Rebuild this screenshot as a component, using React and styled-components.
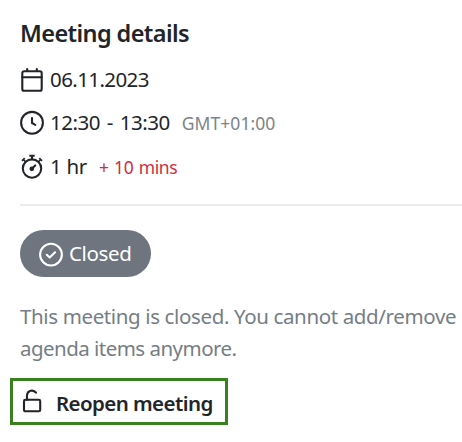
import React from "react";
import styled, { createGlobalStyle } from "styled-components";

const GlobalStyle = createGlobalStyle`
  *, *::before, *::after { box-sizing: border-box; }
  html, body { margin: 0; background: #fff; overflow: hidden; }
`;

const Panel = styled.main`
  height: 442px;
  padding: 14px 0 0 20px;
  background: #fff;
  color: #212529;
  font-family: "Noto Sans", "Open Sans", sans-serif;
  font-size: 20.5px;
  white-space: nowrap;
`;

const Title = styled.h2`
  margin: 0 0 5px;
  font-size: 23.5px;
  line-height: 39px;
  font-weight: 600;
  letter-spacing: ${(p) => p.$spacing}px;
`;

const Row = styled.div`
  display: flex;
  align-items: center;
  height: 43.5px;
`;

const Icon = styled.svg`
  display: block;
  flex: none;
  width: 24px;
  height: 26px;
  margin-right: 6px;
  fill: none;
  stroke: currentColor;
  stroke-width: 2.1;
  stroke-linecap: round;
  stroke-linejoin: round;
`;

const Text = styled.span`
  padding-bottom: 2px;
  letter-spacing: ${(p) => p.$spacing}px;
  word-spacing: ${(p) => p.$words || 0}px;
`;

const Note = styled(Text)`
  margin-left: ${(p) => p.$gap}px;
  padding: 0;
  font-size: 17.5px;
  color: ${(p) => p.$color};
`;

const Divider = styled.hr`
  height: 2px;
  margin: 15.5px 0 23.5px;
  border: 0;
  background: #e9edf1;
`;

const Badge = styled.div`
  display: flex;
  align-items: center;
  width: 131px;
  height: 47px;
  padding: 3px 0 0 19px;
  border-radius: 24px;
  background: #6e757f;
  color: #fff;

  ${Text} { padding-bottom: 4px; }
`;

const Message = styled.p`
  margin: 23px 0 14px;
  line-height: 32px;
  color: #757d85;
`;

const ReopenButton = styled.button`
  display: flex;
  align-items: center;
  width: 218px;
  height: 47px;
  margin-left: -10px;
  padding: 0 0 0 7px;
  border: 3px solid #39801f;
  background: #fff;
  color: #212529;
  font: 600 20.5px "Noto Sans", "Open Sans", sans-serif;

  ${Icon} { margin-right: 12px; }
  ${Text} { padding: 3px 0 0; }
`;

export default function App() {
  return (
    <>
      <GlobalStyle />
      <Panel>
        <Title $spacing={-0.6}>Meeting details</Title>
        <Row>
          <Icon viewBox="0 0 24 26">
            <rect x="2.3" y="4.2" width="19.4" height="19.6" rx="1.8" />
            <path d="M2.3 10.2h19.4M7.2 2v2M16.8 2v2" />
          </Icon>
          <Text $spacing={-0.6}>06.11.2023</Text>
        </Row>
        <Row>
          <Icon viewBox="0 0 24 26">
            <circle cx="12" cy="12.8" r="10.9" />
            <path d="M12 8v5l3.3 1.8" />
          </Icon>
          <Text $spacing={-0.5} $words={2.1}>12:30 - 13:30</Text>
          <Note $gap={12} $spacing={0.05} $color="#7b848c">GMT+01:00</Note>
        </Row>
        <Row>
          <Icon viewBox="0 0 24 26">
            <circle cx="12" cy="14.6" r="9.2" />
            <g strokeLinecap="butt">
              <path d="M12 1.5v4M9.3 1.8h5.4" />
              <path d="M19.3 4.2l2.7 2.7M4.7 4.2L2 6.9M3.8 6l2 2M20.2 6l-2 2" strokeWidth="1.7" />
            </g>
            <path d="M12 14.6l3.2-3.2" />
            <circle cx="11.8" cy="14.8" r="1.3" fill="currentColor" />
          </Icon>
          <Text $spacing={-0.3}>1 hr</Text>
          <Note $gap={12} $spacing={-0.4} $words={1.3} $color="#d42b40">+ 10 mins</Note>
        </Row>
        <Divider />
        <Badge>
          <Icon viewBox="0 0 24 26">
            <circle cx="12" cy="12.6" r="10.9" />
            <path d="M7.8 12.8l2.9 2.7 5.4-5.2" />
          </Icon>
          <Text $spacing={-0.35}>Closed</Text>
        </Badge>
        <Message>
          <Text $spacing={-0.37}>This meeting is closed. You cannot add/remove</Text>
          <br />
          <Text $spacing={-0.53}>agenda items anymore.</Text>
        </Message>
        <ReopenButton type="button">
          <Icon viewBox="0 0 24 26">
            <rect x="4" y="11.8" width="16.2" height="11.5" rx="1.4" />
            <path d="M7 11.8V7.2a5 5 0 0 1 9-2.5" />
          </Icon>
          <Text $spacing={-0.58}>Reopen meeting</Text>
        </ReopenButton>
      </Panel>
    </>
  );
}
